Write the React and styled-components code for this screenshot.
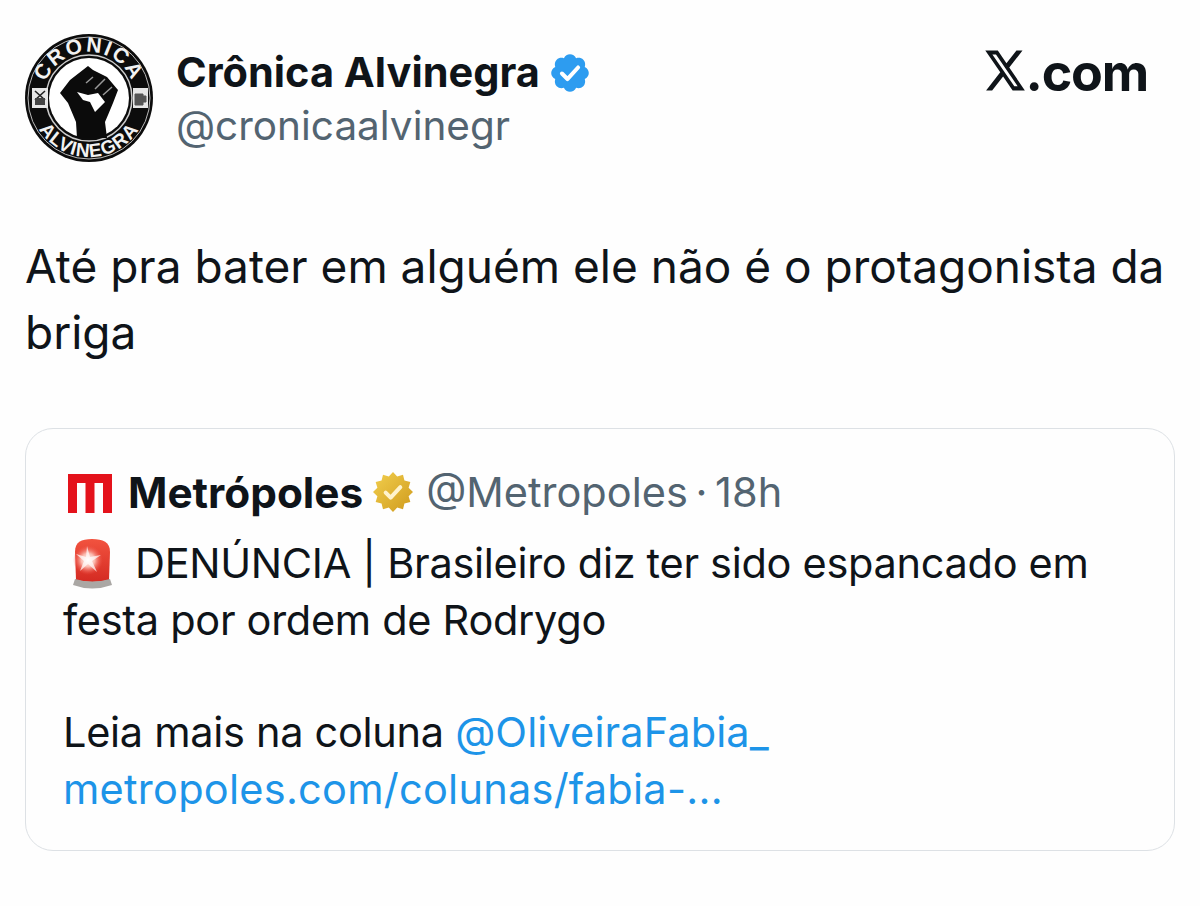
import React from "react";
import styled, { createGlobalStyle } from "styled-components";

const GlobalStyle = createGlobalStyle`
  html, body {
    margin: 0;
    background: #fefefe;
    font-family: Inter, "Noto Sans", sans-serif;
    color: #0f1419;
  }
`;

const Page = styled.div`
  width: 1200px;
  height: 906px;
  box-sizing: border-box;
  padding: 34px 25px 0 25px;
  overflow: hidden;
`;
const Header = styled.header`
  display: flex;
  align-items: flex-start;
  height: 130px;
`;
const Avatar = styled.svg`
  width: 130px;
  height: 130px;
  flex: none;
`;
const Names = styled.div`
  margin-left: 21px;
  padding-top: 12px;
  flex: 1;
`;
const NameRow = styled.div`
  display: flex;
  align-items: center;
  gap: 8px;
`;
const Name = styled.span`
  font-size: 41.5px;
  line-height: 53px;
  font-weight: 700;
`;
const Handle = styled.div`
  font-size: 40.5px;
  line-height: 54px;
  color: #536471;
`;
const Brand = styled.div`
  display: flex;
  align-items: flex-start;
  margin: 12px 27px 0 0;
  color: #0f1419;
`;
const XLogo = styled.svg`
  width: 44px;
  height: 49px;
  margin-right: -2px;
`;
const BrandText = styled.span`
  font-size: 52px;
  line-height: 54px;
  font-weight: 700;
  letter-spacing: -1.2px;
`;
const TweetText = styled.p`
  margin: 69px 0 0 0;
  font-size: 46px;
  line-height: 66px;
  color: #0f1419;
`;
const Quote = styled.section`
  box-sizing: border-box;
  width: 1150px;
  height: 423px;
  margin-top: 63px;
  padding: 35px 38px 0 37px;
  border: 1px solid #dde1e5;
  border-radius: 28px;
`;
const QuoteHead = styled.div`
  display: flex;
  align-items: center;
  height: 56px;
  margin-bottom: 15px;
`;
const QuoteMark = styled.svg`
  flex: none;
  width: 44px;
  height: 39px;
  margin: 3px 0 0 5px;
`;
const QuoteName = styled.span`
  margin-left: 16px;
  font-size: 42.3px;
  font-weight: 700;
`;
const GoldSvg = styled.svg`
  flex: none;
  width: 40px;
  height: 40px;
  margin-left: 10px;
`;
const QuoteMeta = styled.span`
  margin-left: 13px;
  font-size: 41.5px;
  word-spacing: -4px;
  color: #536471;
`;
const QuoteBody = styled.p`
  margin: 0;
  font-size: 41.5px;
  line-height: 56.5px;
  letter-spacing: -0.3px;
  color: #0f1419;
`;
const Spaced = styled.span`
  display: block;
  margin-top: ${props => props.$top || 0}px;
`;
const Link = styled.span`
  color: #1d94e8;
  letter-spacing: ${props => props.$spacing || 0.1}px;
`;
const Beacon = styled.svg`
  width: 41px;
  height: 52px;
  margin: 0 22px -12px 9px;
  vertical-align: baseline;
`;

const BADGE =
  "M22.25 12c0-1.43-.88-2.67-2.19-3.34.46-1.39.2-2.9-.81-3.91s-2.52-1.27-3.91-.81c-.66-1.31-1.91-2.19-3.34-2.19s-2.67.88-3.33 2.19c-1.4-.46-2.91-.2-3.92.81s-1.26 2.52-.8 3.91c-1.31.67-2.2 1.91-2.2 3.34s.89 2.67 2.2 3.34c-.46 1.39-.21 2.9.8 3.91s2.52 1.26 3.91.81c.67 1.31 1.91 2.19 3.34 2.19s2.68-.88 3.34-2.19c1.39.45 2.9.2 3.91-.81s1.27-2.52.81-3.91c1.31-.67 2.19-1.91 2.19-3.34z";

const BlueBadge = () => (
  <svg width="44" height="44" viewBox="0 0 24 24">
    <path d={BADGE} fill="#2d9cf0" />
    <path d="M7.6 12.3l3 3 5.8-6.3" fill="none" stroke="#fff" strokeWidth="2.2" strokeLinecap="round" strokeLinejoin="round" />
  </svg>
);

const starPoints = Array.from({ length: 24 }, (_, i) => {
  const r = i % 2 ? 9.7 : 12;
  const a = (i * Math.PI) / 12 - Math.PI / 2;
  return `${(12 + r * Math.cos(a)).toFixed(2)},${(12 + r * Math.sin(a)).toFixed(2)}`;
}).join(" ");

const GoldBadge = () => (
  <GoldSvg viewBox="0 0 24 24">
    <defs>
      <linearGradient id="gold" x1="0" y1="0" x2="1" y2="1">
        <stop offset="0" stopColor="#f2cf4e" />
        <stop offset="1" stopColor="#cf9a1c" />
      </linearGradient>
    </defs>
    <polygon points={starPoints} fill="url(#gold)" />
    <path d="M7.6 12.4l3 3 5.8-6.3" fill="none" stroke="#fff3cc" strokeWidth="2.4" strokeLinecap="round" strokeLinejoin="round" />
  </GoldSvg>
);

const XMark = () => (
  <XLogo viewBox="0 0 24 24" preserveAspectRatio="none" fill="currentColor">
    <path d="M18.244 2.25h3.308l-7.227 8.26 8.502 11.24H16.17l-5.214-6.817L4.99 21.75H1.68l7.73-8.835L1.254 2.25H8.08l4.713 6.231zm-1.161 17.52h1.833L7.084 4.126H5.117z" />
  </XLogo>
);

const MetropolesMark = () => (
  <QuoteMark viewBox="0 0 44 39">
    <path d="M0 0H44V39H35V9H26.5V39H17.5V9H9V39H0Z" fill="#e4121b" />
  </QuoteMark>
);

const AlarmLight = () => (
  <Beacon viewBox="0 0 41 52">
    <defs>
      <linearGradient id="dome" x1="0" y1="0" x2="0" y2="1">
        <stop offset="0" stopColor="#f2533f" />
        <stop offset="1" stopColor="#d42a22" />
      </linearGradient>
      <radialGradient id="flare" cx="0.5" cy="0.5" r="0.5">
        <stop offset="0" stopColor="#fff" />
        <stop offset="0.45" stopColor="#fbb9ae" />
        <stop offset="1" stopColor="#f04a3e" stopOpacity="0" />
      </radialGradient>
    </defs>
    <path d="M4 42L3 14C3 4 9 1 20 1S38 4 38 14L37 42Q20 46 4 42Z" fill="url(#dome)" />
    <circle cx="16" cy="22" r="15" fill="url(#flare)" />
    <path d="M15 8L18 19 29 17 20 23 25 34 16 26 8 33 12 23 4 16 14 19Z" fill="#fff" opacity="0.7" />
    <path d="M3 41Q20 46 38 41L40 47Q20 54 1 47Z" fill="#aaa7a4" />
  </Beacon>
);

const Fist = () => (
  <g>
    <path
      d="M63 32L68 36 82 43 93 56 88 69 83 81 80 88 82 104H52L51 88 43 69 35 59 45 46Z"
      fill="#0b0b0b"
    />
    <path d="M52 58L63 61 73 59 80 68 70 78 65 68 58 66Z" fill="#fff" />
    <path d="M61 49L68 43M70 55L80 45M78 61L87 53" stroke="#999" strokeWidth="1.5" fill="none" />
  </g>
);

const Logo = () => (
  <Avatar viewBox="0 0 130 130">
    <defs>
      <path id="arcTop" d="M18 64A46 46 0 0 1 110 64" />
      <path id="arcBottom" d="M5 64A59 59 0 0 0 123 64" />
    </defs>
    <circle cx="64" cy="64" r="64" fill="#0c0c0c" />
    <circle cx="64" cy="64" r="61" fill="none" stroke="#bbb" strokeWidth="1" />
    <circle cx="64" cy="64" r="43" fill="#0c0c0c" stroke="#ccc" strokeWidth="1.5" />
    <circle cx="64" cy="64" r="40" fill="#fff" />
    <rect x="7" y="54" width="16" height="20" fill="#e6e6e6" />
    <rect x="108" y="54" width="15" height="20" fill="#e6e6e6" />
    <path d="M10 57L20 66M20 57L10 66" stroke="#222" strokeWidth="1.6" />
    <rect x="10" y="64" width="10" height="7" fill="#444" />
    <path d="M110 60H118V71H110ZM118 62H121V68H118" fill="#555" stroke="#555" strokeWidth="1" />
    <text fontFamily="Liberation Sans, sans-serif" fontWeight="700" fontSize="21" letterSpacing="2" fill="#f2f2f2" textAnchor="middle">
      <textPath href="#arcTop" startOffset="50%">CRONICA</textPath>
    </text>
    <text fontFamily="Liberation Sans, sans-serif" fontWeight="700" fontSize="19" letterSpacing="1" fill="#f2f2f2" textAnchor="middle">
      <textPath href="#arcBottom" startOffset="50%">ALVINEGRA</textPath>
    </text>
    <Fist />
  </Avatar>
);

export default function App() {
  return (
    <Page>
      <GlobalStyle />
      <Header>
        <Logo />
        <Names>
          <NameRow>
            <Name>Crônica Alvinegra</Name>
            <BlueBadge />
          </NameRow>
          <Handle>@cronicaalvinegr</Handle>
        </Names>
        <Brand>
          <XMark />
          <BrandText>.com</BrandText>
        </Brand>
      </Header>
      <TweetText>Até pra bater em alguém ele não é o protagonista da briga</TweetText>
      <Quote>
        <QuoteHead>
          <MetropolesMark />
          <QuoteName>Metrópoles</QuoteName>
          <GoldBadge />
          <QuoteMeta>@Metropoles · 18h</QuoteMeta>
        </QuoteHead>
        <QuoteBody>
          <AlarmLight />
          DENÚNCIA | Brasileiro diz ter sido espancado em festa por ordem de Rodrygo
          <Spaced $top={56}>
            Leia mais na coluna <Link>@OliveiraFabia_</Link>
          </Spaced>
          <Spaced>
            <Link $spacing={0.25}>metropoles.com/colunas/fabia-...</Link>
          </Spaced>
        </QuoteBody>
      </Quote>
    </Page>
  );
}
